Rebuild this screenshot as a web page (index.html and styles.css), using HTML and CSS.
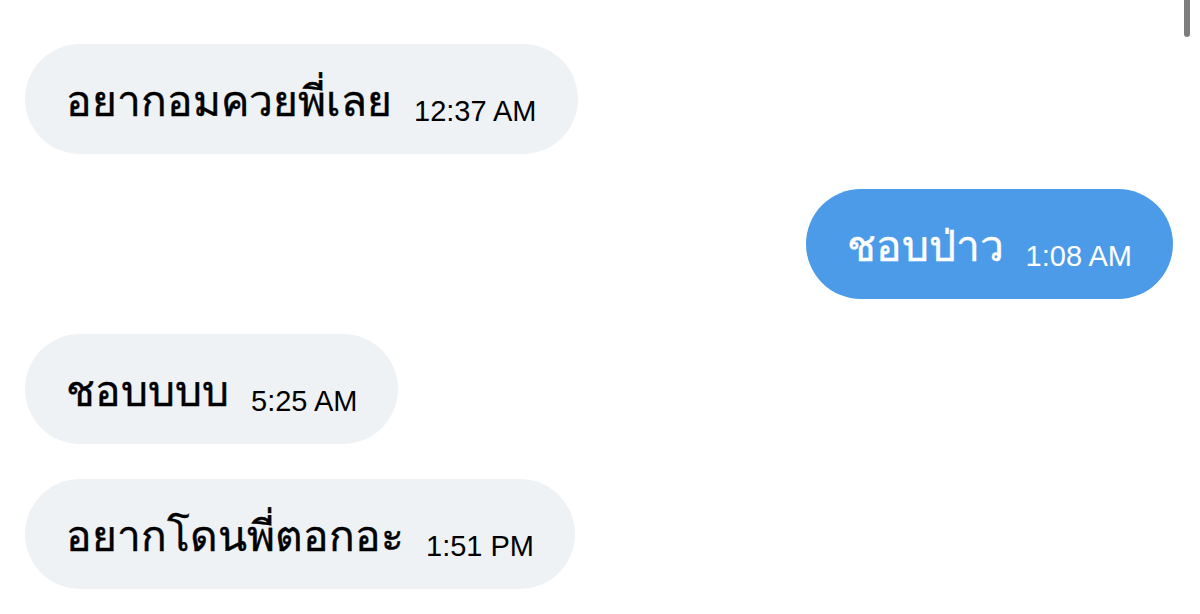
FILE: index.html
```html
<!DOCTYPE html>
<html lang="th">
<head>
<meta charset="utf-8">
<link rel="stylesheet" href="styles.css">
</head>
<body>
<div class="scrollbar"></div>
<div class="chat">
  <div class="row in">
    <div class="bubble"><span class="msg">อยากอมควยพี่เลย</span><span class="time">12:37 AM</span></div>
  </div>
  <div class="row out">
    <div class="bubble"><span class="msg">ชอบป่าว</span><span class="time">1:08 AM</span></div>
  </div>
  <div class="row in">
    <div class="bubble"><span class="msg">ชอบบบบ</span><span class="time">5:25 AM</span></div>
  </div>
  <div class="row in">
    <div class="bubble"><span class="msg">อยากโดนพี่ตอกอะ</span><span class="time">1:51 PM</span></div>
  </div>
</div>
</body>
</html>
```
FILE: styles.css
```css
html, body {
  margin: 0;
  padding: 0;
  background: #ffffff;
  height: 100%;
  overflow: hidden;
}
body {
  font-family: "Liberation Sans", "Noto Sans", sans-serif;
  position: relative;
}
.scrollbar {
  position: absolute;
  top: -6px;
  right: 10px;
  width: 6px;
  height: 43px;
  border-radius: 3px;
  background: #7d7d7d;
}
.chat {
  display: flex;
  flex-direction: column;
  gap: 35px;
  padding: 44px 27px 0 25px;
}
.row {
  display: flex;
}
.row.out {
  justify-content: flex-end;
}
.bubble {
  height: 110px;
  box-sizing: border-box;
  border-radius: 55px;
  padding: 0 41px;
  display: flex;
  align-items: baseline;
  justify-content: flex-start;
  gap: 22px;
  background: #eff2f4;
  color: #000000;
  line-height: 116px;
}
.row.out .bubble {
  background: #4c9be8;
  color: #ffffff;
}
.msg {
  font-size: 42.5px;
  -webkit-text-stroke: 0.4px currentColor;
}
.time {
  font-size: 29px;
  position: relative;
  top: 5px;
}
```
